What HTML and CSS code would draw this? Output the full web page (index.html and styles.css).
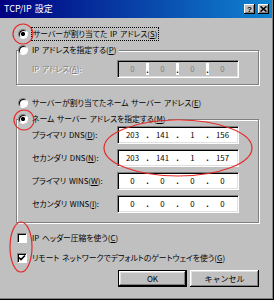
FILE: index.html
```html
<!DOCTYPE html>
<html lang="ja">
<head>
  <meta charset="UTF-8">
  <title>TCP/IP 設定</title>
  <link rel="stylesheet" href="styles.css">
</head>
<body>

  <div class="window">
    <div class="title-bar">
      <span class="title-text">TCP/IP 設定</span>
      <div class="title-buttons">
        <span class="title-button">?</span>
        <span class="title-button">
          <svg width="7" height="6" viewBox="0 0 7 6"><path d="M0.5 0.5 L6.5 5.5 M6.5 0.5 L0.5 5.5" stroke="#000" stroke-width="1.6"/></svg>
        </span>
      </div>
    </div>

    <div class="dialog">
      <div class="option">
        <span class="radio checked"></span>
        <span class="focus-text">サーバーが割り当てた IP アドレス(<u>S</u>)</span>
      </div>

      <div class="group group-ip">
        <div class="group-title">
          <span class="radio"></span>
          <span>IP アドレスを指定する(<u>P</u>)</span>
        </div>
        <div class="field-row first-row">
          <span class="field-label disabled-text">IP アドレス(<u>A</u>):</span>
          <div class="ip-field disabled">
            <span class="seg">0</span><span class="dot">.</span><span class="seg">0</span><span class="dot">.</span><span class="seg">0</span><span class="dot">.</span><span class="seg">0</span>
          </div>
        </div>
      </div>

      <div class="option option-dns">
        <span class="radio"></span>
        <span>サーバーが割り当てたネーム サーバー アドレス(<u>E</u>)</span>
      </div>

      <div class="group group-dns">
        <div class="group-title">
          <span class="radio checked"></span>
          <span>ネーム サーバー アドレスを指定する(<u>M</u>)</span>
        </div>
        <div class="field-row first-row">
          <span class="field-label">プライマリ DNS(<u>D</u>):</span>
          <div class="ip-field">
            <span class="seg">203</span><span class="dot">.</span><span class="seg">141</span><span class="dot">.</span><span class="seg">1</span><span class="dot">.</span><span class="seg">156</span>
          </div>
        </div>
        <div class="field-row">
          <span class="field-label">セカンダリ DNS(<u>N</u>):</span>
          <div class="ip-field">
            <span class="seg">203</span><span class="dot">.</span><span class="seg">141</span><span class="dot">.</span><span class="seg">1</span><span class="dot">.</span><span class="seg">157</span>
          </div>
        </div>
        <div class="field-row">
          <span class="field-label">プライマリ WINS(<u>W</u>):</span>
          <div class="ip-field">
            <span class="seg">0</span><span class="dot">.</span><span class="seg">0</span><span class="dot">.</span><span class="seg">0</span><span class="dot">.</span><span class="seg">0</span>
          </div>
        </div>
        <div class="field-row">
          <span class="field-label">セカンダリ WINS(<u>I</u>):</span>
          <div class="ip-field">
            <span class="seg">0</span><span class="dot">.</span><span class="seg">0</span><span class="dot">.</span><span class="seg">0</span><span class="dot">.</span><span class="seg">0</span>
          </div>
        </div>
      </div>

      <div class="check-row first-check">
        <span class="check"></span>
        <span>IP ヘッダー圧縮を使う(<u>C</u>)</span>
      </div>
      <div class="check-row">
        <span class="check">
          <svg width="8" height="8" viewBox="0 0 8 8"><path d="M1 3.5 L3 5.5 L7 1.5" fill="none" stroke="#000" stroke-width="1.6"/></svg>
        </span>
        <span>リモート ネットワークでデフォルトのゲートウェイを使う(<u>G</u>)</span>
      </div>

      <div class="buttons">
        <button type="button" class="button default">OK</button>
        <button type="button" class="button">キャンセル</button>
      </div>
    </div>

    <!-- red pen marks drawn over the dialog -->
    <svg class="marks" width="274" height="300" viewBox="0 0 274 300">
      <circle cx="23" cy="34" r="10" />
      <circle cx="24" cy="120" r="10" />
      <ellipse cx="178" cy="148" rx="74" ry="28" />
      <ellipse cx="21" cy="247" rx="11" ry="25" />
    </svg>
  </div>

</body>
</html>
```

FILE: styles.css
```css
* {
  box-sizing: border-box;
}
body {
  margin: 0;
  background: #c0c0c0;
  font-family: "Noto Sans CJK JP", "Noto Sans", sans-serif;
  font-size: 7.8px;
  line-height: 12px;
  word-spacing: 1px;
  color: #000;
  font-feature-settings: "palt" 1;
}
u {
  text-decoration: underline;
}
.window {
  position: relative;
  width: 274px;
  height: 300px;
  background: #c0c0c0;
  box-shadow: inset -1px -1px 0 #000, inset -2px -2px 0 #808080;
}
.title-bar {
  height: 18px;
  margin-right: 2px;
  padding: 0 3px 0 4px;
  display: flex;
  align-items: center;
  justify-content: space-between;
  background: linear-gradient(90deg, #000080, #1084d0);
  color: #fff;
}
.title-text {
  font-size: 9px;
}
.title-buttons {
  display: flex;
  gap: 3px;
}
.title-button {
  width: 11px;
  height: 10px;
  display: flex;
  align-items: center;
  justify-content: center;
  background: #c0c0c0;
  color: #000;
  font: bold 8px "Liberation Sans", sans-serif;
  box-shadow: inset -1px -1px 0 #000, inset 1px 1px 0 #fff, inset -2px -2px 0 #808080;
}
.dialog {
  width: 259px;
  padding: 10px 0 0 16px;
  display: flex;
  flex-direction: column;
}
.option {
  display: flex;
  align-items: center;
  gap: 4px;
  height: 12px;
  padding-left: 2px;
}
.option-dns {
  margin-top: 12px;
}
.radio {
  flex: none;
  width: 10px;
  height: 10px;
  border-radius: 50%;
  background: #fff;
  border: 1px solid;
  border-color: #808080 #fff #fff #808080;
  box-shadow: inset 1px 1px 0 #000;
}
.radio.checked {
  background: radial-gradient(circle, #000 0, #000 1.8px, #fff 2.4px);
}
.focus-text {
  outline: 1px dotted #000;
  padding: 0 1px;
}
.group {
  width: 243px;
  margin-top: 10px;
  display: flex;
  flex-direction: column;
  border: 1px solid #808080;
  box-shadow: 1px 1px 0 #fff, inset 1px 1px 0 #fff;
}
.group-ip {
  padding-bottom: 6px;
}
.group-dns {
  padding-bottom: 9px;
}
.group-title {
  align-self: flex-start;
  display: flex;
  align-items: center;
  gap: 4px;
  height: 12px;
  margin: -7px 0 0 1px;
  padding-right: 3px;
  background: #c0c0c0;
}
.field-row {
  display: flex;
  align-items: center;
  height: 18px;
  margin-top: 5px;
  padding-left: 15px;
}
.group-ip .first-row {
  margin-top: 4px;
}
.group-dns .first-row {
  margin-top: 1px;
}
.field-label {
  width: 85px;
}
.disabled-text {
  color: #808080;
  text-shadow: 1px 1px 0 #fff;
}
.ip-field {
  width: 122px;
  height: 18px;
  padding: 0 1px;
  display: flex;
  align-items: center;
  background: #fff;
  border: 1px solid;
  border-color: #808080 #fff #fff #808080;
  box-shadow: inset 1px 1px 0 #000, inset -1px -1px 0 #dfdfdf;
}
.ip-field.disabled {
  background: #c0c0c0;
  color: #808080;
}
.ip-field.disabled .dot {
  background: #fff;
  color: #000;
  align-self: stretch;
  margin: 2px 0;
  line-height: 14px;
}
.seg {
  width: 27px;
  text-align: center;
}
.dot {
  width: 3px;
  text-align: center;
  font-weight: bold;
}
.check-row {
  display: flex;
  align-items: center;
  gap: 5px;
  height: 12px;
  margin-top: 8px;
  padding-left: 1px;
}
.first-check {
  margin-top: 9px;
}
.check {
  flex: none;
  width: 10px;
  height: 10px;
  display: flex;
  align-items: center;
  justify-content: center;
  background: #fff;
  border: 1px solid;
  border-color: #808080 #fff #fff #808080;
  box-shadow: inset 1px 1px 0 #000;
}
.buttons {
  width: 243px;
  margin-top: 6px;
  display: flex;
  justify-content: flex-end;
  gap: 3px;
}
.button {
  width: 69px;
  height: 17px;
  padding: 0;
  border: none;
  background: #c0c0c0;
  font-family: inherit;
  font-size: 8px;
  color: #000;
  box-shadow: inset -1px -1px 0 #000, inset 1px 1px 0 #fff, inset -2px -2px 0 #808080, inset 2px 2px 0 #dfdfdf;
}
.button.default {
  border: 1px solid #000;
}
.marks {
  position: absolute;
  top: 0;
  left: 0;
  pointer-events: none;
}
.marks circle,
.marks ellipse {
  fill: none;
  stroke: #e42a2a;
  stroke-width: 1.2;
}
```
